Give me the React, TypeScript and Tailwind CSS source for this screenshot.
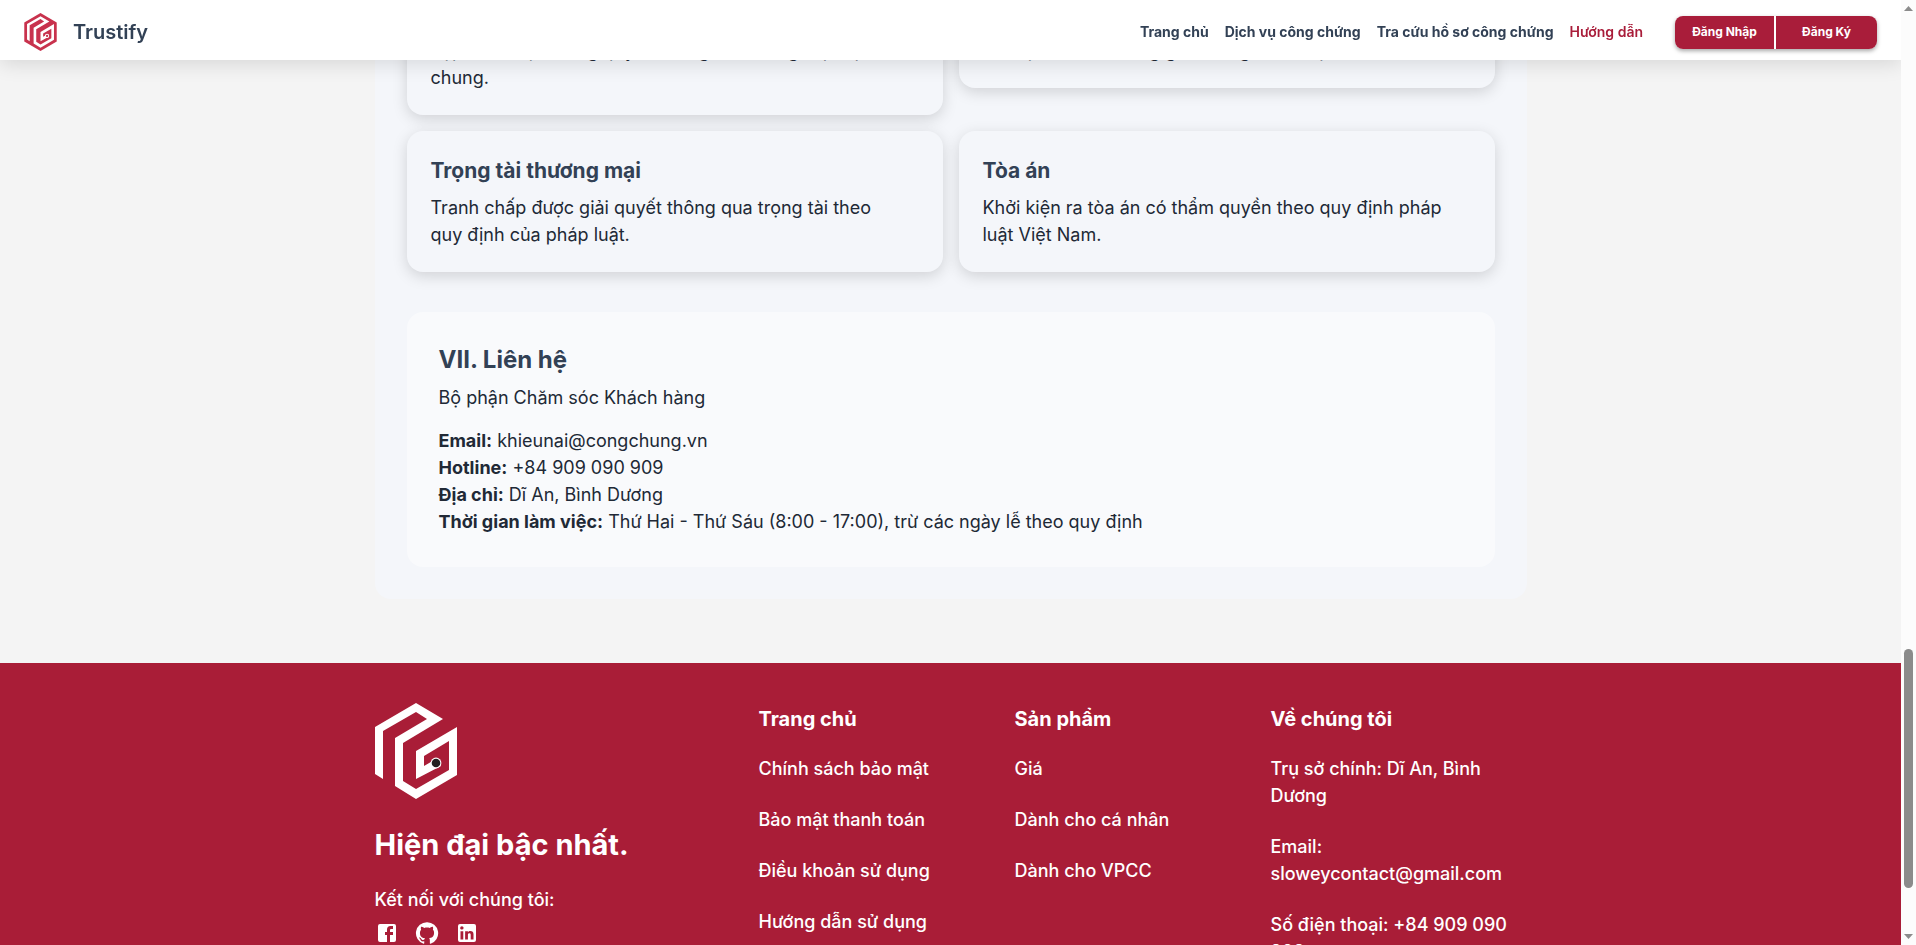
const FONT = "font-['Inter','Noto_Sans',sans-serif]";

const navItems = [
  { label: "Trang chủ", active: false },
  { label: "Dịch vụ công chứng", active: false },
  { label: "Tra cứu hồ sơ công chứng", active: false },
  { label: "Hướng dẫn", active: true },
];

const methods = [
  {
    title: "Thương lượng",
    text: "Các bên liên quan tự thương lượng trên cơ sở\nhợp tác, thiện chí, góp ý để cùng nhau có giải pháp\nchung.",
  },
  {
    title: "Hòa giải",
    text: "Hòa giải thông qua trung tâm hòa giải hoặc\ncó một tổ chức trung gian đứng ra hỗ trợ.",
  },
  {
    title: "Trọng tài thương mại",
    text: "Tranh chấp được giải quyết thông qua trọng tài theo quy định của pháp luật.",
  },
  {
    title: "Tòa án",
    text: "Khởi kiện ra tòa án có thẩm quyền theo quy định pháp luật Việt Nam.",
  },
];

const contacts = [
  { label: "Email:", value: "khieunai@congchung.vn" },
  { label: "Hotline:", value: "+84 909 090 909" },
  { label: "Địa chỉ:", value: "Dĩ An, Bình Dương" },
  {
    label: "Thời gian làm việc:",
    value: "Thứ Hai - Thứ Sáu (8:00 - 17:00), trừ các ngày lễ theo quy định",
  },
];

const footerColumns = [
  {
    title: "Trang chủ",
    items: ["Chính sách bảo mật", "Bảo mật thanh toán", "Điều khoản sử dụng", "Hướng dẫn sử dụng"],
  },
  { title: "Sản phẩm", items: ["Giá", "Dành cho cá nhân", "Dành cho VPCC"] },
  {
    title: "Về chúng tôi",
    items: [
      "Trụ sở chính: Dĩ An, Bình Dương",
      "Email: sloweycontact@gmail.com",
      "Số điện thoại: +84 909 090 909",
    ],
  },
];

const socials = [
  {
    label: "Facebook",
    path: "M5 3h14a2 2 0 0 1 2 2v14a2 2 0 0 1-2 2H5a2 2 0 0 1-2-2V5a2 2 0 0 1 2-2m13 2h-2.5A3.5 3.5 0 0 0 12 8.5V11h-2v3h2v7h3v-7h3v-3h-3V9a1 1 0 0 1 1-1h2V5z",
  },
  {
    label: "GitHub",
    path: "M12 1.27a11 11 0 00-3.48 21.46c.55.09.73-.28.73-.55v-1.84c-3.03.64-3.67-1.46-3.67-1.46-.55-1.29-1.28-1.65-1.28-1.65-.92-.65.1-.65.1-.65 1.1 0 1.73 1.1 1.73 1.1.92 1.65 2.57 1.2 3.21.92a2 2 0 01.64-1.47c-2.47-.27-5.04-1.19-5.04-5.5 0-1.1.46-2.1 1.2-2.84a3.76 3.76 0 010-2.93s.91-.28 3.11 1.1c1.8-.49 3.7-.49 5.5 0 2.1-1.38 3.02-1.1 3.02-1.1a3.76 3.76 0 01.1 2.93c.83.74 1.2 1.74 1.2 2.94 0 4.21-2.57 5.13-5.04 5.4.45.37.82.92.82 2.02v3.03c0 .27.1.64.73.55A11 11 0 0012 1.27",
  },
  {
    label: "LinkedIn",
    path: "M19 3a2 2 0 0 1 2 2v14a2 2 0 0 1-2 2H5a2 2 0 0 1-2-2V5a2 2 0 0 1 2-2h14m-.5 15.5v-5.3a3.26 3.26 0 0 0-3.26-3.26c-.85 0-1.84.52-2.32 1.3v-1.11h-2.79v8.37h2.79v-4.93c0-.77.62-1.4 1.39-1.4a1.4 1.4 0 0 1 1.4 1.4v4.93h2.79M6.88 8.56a1.68 1.68 0 0 0 1.68-1.68c0-.93-.75-1.69-1.68-1.69a1.69 1.69 0 0 0-1.69 1.69c0 .93.76 1.68 1.69 1.68m1.39 9.94v-8.37H5.5v8.37h2.77z",
  },
];

const GLYPH =
  "M41 0 68 16 28 40V78L41 86 74 67V38L49 53V63L61 56 66 63 41 76V48L82 24V72L41 96 20 83V35L52 16 41 9 8 28V76L0 71V24Z";

function FooterLogo() {
  return (
    <svg viewBox="0 0 82 96" className="block h-24 w-[82px]" aria-hidden="true">
      <path d={GLYPH} fill="#fff" />
      <circle cx="61" cy="60" r="5.4" fill="#fff" />
      <circle cx="61" cy="60" r="4.3" fill="#231f20" />
    </svg>
  );
}

function HeaderLogo() {
  return (
    <svg viewBox="0 0 82 96" className="block h-[38px] w-[33px]" aria-hidden="true">
      <path d="M41 0 82 24V72L41 96 0 72V24Z" fill="#c8324d" />
      <g transform="translate(7 8) scale(0.83)">
        <path d={GLYPH} fill="#fff" />
        <circle cx="61" cy="60" r="6.5" fill="#fff" />
        <circle cx="61" cy="60" r="3.5" fill="#c8324d" />
      </g>
    </svg>
  );
}

function Header() {
  return (
    <header className="fixed top-0 right-[15px] left-0 z-10 flex h-[60px] items-center bg-white px-6 pt-1 shadow-[0_4px_20px_rgba(0,0,0,0.12)]">
      <a href="#" className="flex items-center gap-4 text-xl font-semibold text-[#324155]">
        <HeaderLogo />
        Trustify
      </a>
      <nav className="ml-auto flex gap-4 text-sm font-bold text-[#324155]">
        {navItems.map((item) => (
          <a key={item.label} href="#" className={item.active ? "font-semibold text-[#a91d3a]" : ""}>
            {item.label}
          </a>
        ))}
      </nav>
      <div className="ml-8 flex overflow-hidden rounded-lg bg-white shadow-[0_2px_4px_rgba(0,0,0,0.35)]">
        <button className="h-[33px] w-[101px] border-r-2 border-white bg-[#a91d3a] text-xs font-bold text-white">
          Đăng Nhập
        </button>
        <button className="h-[33px] w-[101px] bg-[#a91d3a] text-xs font-bold text-white">Đăng Ký</button>
      </div>
    </header>
  );
}

function Footer() {
  return (
    <footer className="mt-16 bg-[#a91d37] py-10 text-white">
      <div className="mx-auto grid max-w-[1152px] grid-cols-[3fr_2fr_2fr_2fr]">
        <div>
          <FooterLogo />
          <h2 className="mt-6 text-[29px] leading-[43px] font-bold">Hiện đại bậc nhất.</h2>
          <p className="mt-5 text-lg leading-[27px] font-medium">Kết nối với chúng tôi:</p>
          <div className="mt-2 flex gap-4">
            {socials.map((s) => (
              <a key={s.label} href="#" aria-label={s.label}>
                <svg viewBox="0 0 24 24" className="block size-6" fill="currentColor">
                  <path d={s.path} />
                </svg>
              </a>
            ))}
          </div>
        </div>
        {footerColumns.map((column) => (
          <div key={column.title}>
            <h3 className="mb-5 text-xl leading-8 font-bold">{column.title}</h3>
            <ul className="space-y-6 text-lg leading-[27px] font-medium">
              {column.items.map((item) => (
                <li key={item}>{item}</li>
              ))}
            </ul>
          </div>
        ))}
      </div>
    </footer>
  );
}

function Scrollbar() {
  return (
    <div className="fixed inset-y-0 right-0 z-20 flex w-[15px] flex-col items-center bg-[#fcfcfc] py-1.5" aria-hidden="true">
      <svg viewBox="0 0 9 5" className="h-[5px] w-[9px] shrink-0" fill="#8b8b8b">
        <path d="M4.5 0 9 5H0Z" />
      </svg>
      <div className="flex w-[9px] flex-1 flex-col">
        <div className="grow-[638]" />
        <div className="grow-[239] rounded-full bg-[#8b8b8b]" />
        <div className="grow-[46]" />
      </div>
      <svg viewBox="0 0 9 5" className="h-[5px] w-[9px] shrink-0" fill="#8b8b8b">
        <path d="M0 0H9L4.5 5Z" />
      </svg>
    </div>
  );
}

export default function App() {
  return (
    <div className={`${FONT} h-screen overflow-hidden bg-[#f4f4f4] pr-[15px] text-[#212936]`}>
      <Header />
      <main className="mx-auto -mt-[53px] max-w-[1152px] rounded-2xl bg-[#f4f6fa] px-8 pb-8">
        <div className="grid grid-cols-2 items-start gap-4">
          {methods.map((method) => (
            <section key={method.title} className="rounded-2xl bg-[#f4f6fa] p-6 shadow-[0_4px_15px_rgba(0,0,0,0.15)]">
              <h3 className="mb-[7px] text-[21px] leading-8 font-bold text-[#324155]">{method.title}</h3>
              <p className="pr-4 text-lg leading-[27px] whitespace-pre-line">{method.text}</p>
            </section>
          ))}
        </div>
        <section className="mt-10 rounded-2xl bg-[#f9fafc] p-8 text-lg leading-[27px]">
          <h2 className="mb-2 text-2xl leading-8 font-bold text-[#324155]">VII. Liên hệ</h2>
          <p className="mb-4">Bộ phận Chăm sóc Khách hàng</p>
          {contacts.map((c) => (
            <p key={c.label}>
              <strong className="font-bold">{c.label}</strong> {c.value}
            </p>
          ))}
        </section>
      </main>
      <Footer />
      <Scrollbar />
    </div>
  );
}
